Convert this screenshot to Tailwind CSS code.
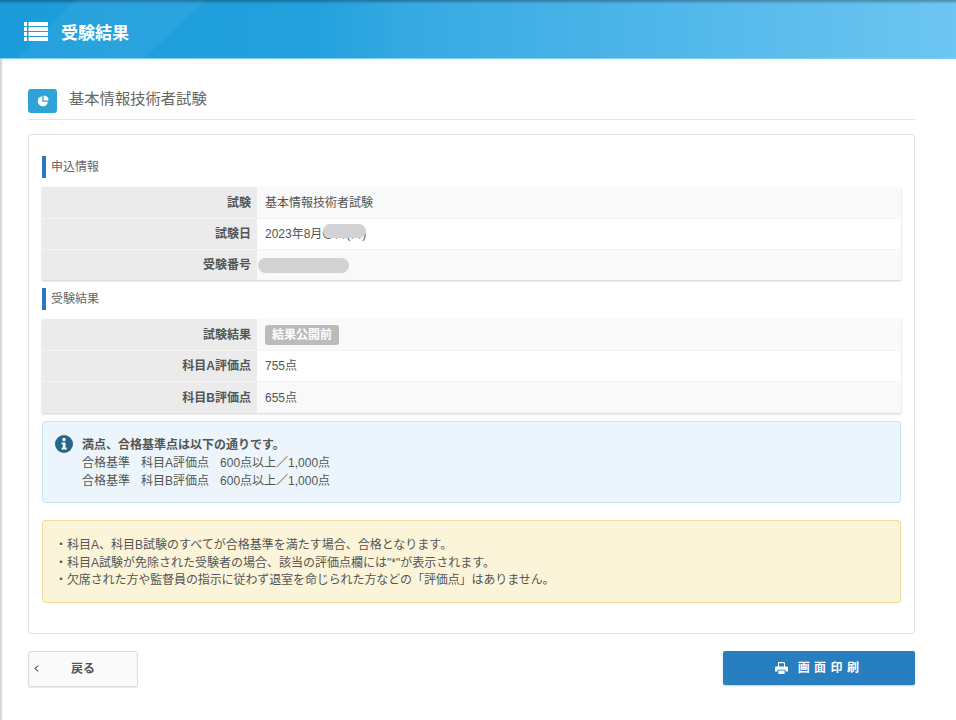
<!DOCTYPE html>
<html lang="ja">
<head>
  <meta charset="UTF-8">
  <meta name="viewport" content="width=device-width, initial-scale=1.0">
  <script src="https://cdn.jsdelivr.net/npm/@tailwindcss/browser@4"></script>
</head>
<body>
<div class="relative min-h-[720px] h-[720px] overflow-hidden bg-white text-[12px] text-[#555] font-['Liberation_Sans','Noto_Sans_CJK_JP',sans-serif]">
  <!-- left edge shadow -->
  <div class="absolute left-0 top-0 bottom-0 w-[3px] bg-gradient-to-r from-[#c8c8c8] to-white"></div>

  <!-- header -->
  <header class="relative h-[59px] border-b border-[#7fcdf0] bg-[linear-gradient(90deg,#1a9cdb_0%,#22a1dd_33%,#35a9e2_42%,#4db5e9_67%,#6dc6f1_100%)] overflow-hidden flex items-center pl-[24px] pt-[4px]">
    <div class="absolute inset-x-0 top-0 h-[4px] bg-gradient-to-b from-black/30 to-transparent"></div>
    <div class="absolute left-0 top-0 h-full w-[205px] bg-white/5 [clip-path:polygon(75px_0,205px_0,145px_100%,18px_100%)]"></div>
    <svg class="relative" width="24" height="19" viewBox="0 0 24 19" fill="#fff">
      <rect x="0" y="0" width="3" height="4"/><rect x="4.5" y="0" width="19.5" height="4"/>
      <rect x="0" y="5" width="3" height="4"/><rect x="4.5" y="5" width="19.5" height="4"/>
      <rect x="0" y="10" width="3" height="4"/><rect x="4.5" y="10" width="19.5" height="4"/>
      <rect x="0" y="15" width="3" height="4"/><rect x="4.5" y="15" width="19.5" height="4"/>
    </svg>
    <h1 class="relative ml-[13px] mt-[6px] text-[17px] font-bold text-white">受験結果</h1>
  </header>

  <main class="pl-[28px] pr-[41px] pt-[30px]">
    <!-- title -->
    <div class="flex items-center h-[24px] border-b border-[#e5e5e5] pb-[6px] box-content">
      <span class="flex items-center justify-center w-[29px] h-[24px] rounded-[3px] bg-[#2ea3d8]">
        <svg width="12" height="12" viewBox="0 0 12 12" fill="#fff">
          <path d="M5.3 1.2A5 5 0 1 0 10.8 6.7H5.3Z"/><path d="M6.6 0.4A5 5 0 0 1 11.6 5.4H6.6Z"/>
        </svg>
      </span>
      <h2 class="ml-[12px] mb-[3px] text-[15.3px] text-[#666]">基本情報技術者試験</h2>
    </div>

    <!-- card -->
    <section class="mt-[14px] h-[500px] border border-[#e0e0e0] rounded-[3px] px-[13px] pt-[21px]">
      <h3 class="border-l-[4px] border-[#2d78b8] pl-[5px] h-[22px] leading-[22px] text-[#666]">申込情報</h3>

      <table class="relative mt-[9px] w-full border-collapse shadow-[0_1px_2px_rgba(0,0,0,0.2)]">
        <tr class="h-[31px] bg-[#f9f9f9] border-b border-[#f4f4f4]">
          <th class="w-[215px] bg-[#ebebeb] pr-[6px] pt-[1px] text-right font-bold">試験</th>
          <td class="pl-[8px] pt-[1px]">基本情報技術者試験</td>
        </tr>
        <tr class="h-[31px] bg-white border-b border-[#f4f4f4]">
          <th class="bg-[#ebebeb] pr-[6px] pt-[1px] text-right font-bold">試験日</th>
          <td class="relative pl-[8px] pt-[1px]">2023年8月〇日(日)<span class="absolute left-[66px] top-[5px] w-[43px] h-[14px] rounded-full bg-[#d2d2d4]"></span></td>
        </tr>
        <tr class="h-[31px] bg-[#f9f9f9]">
          <th class="bg-[#ebebeb] pr-[6px] pt-[1px] text-right font-bold">受験番号</th>
          <td class="relative pl-[8px]"><span class="absolute left-[1px] top-[8px] w-[91px] h-[15px] rounded-full bg-[#d2d2d4]"></span></td>
        </tr>
      </table>

      <h3 class="mt-[8px] border-l-[4px] border-[#2d78b8] pl-[5px] h-[22px] leading-[22px] text-[#666]">受験結果</h3>

      <table class="mt-[9px] w-full border-collapse shadow-[0_1px_2px_rgba(0,0,0,0.2)]">
        <tr class="h-[31px] bg-[#f9f9f9] border-b border-[#f4f4f4]">
          <th class="w-[215px] bg-[#ebebeb] pr-[6px] pt-[1px] text-right font-bold">試験結果</th>
          <td class="pl-[8px] pt-[1px]"><span class="inline-block h-[20px] leading-[20px] px-[7px] rounded-[3px] bg-[#bbb] text-white font-bold align-middle">結果公開前</span></td>
        </tr>
        <tr class="h-[31px] bg-white border-b border-[#f4f4f4]">
          <th class="bg-[#ebebeb] pr-[6px] pt-[1px] text-right font-bold">科目A評価点</th>
          <td class="pl-[8px] pt-[1px]">755点</td>
        </tr>
        <tr class="h-[32px] bg-[#f9f9f9]">
          <th class="bg-[#ebebeb] pr-[6px] pt-[1px] text-right font-bold">科目B評価点</th>
          <td class="pl-[8px] pt-[1px]">655点</td>
        </tr>
      </table>

      <!-- info -->
      <div class="mt-[8px] h-[82px] flex border border-[#c5e6f2] rounded-[3px] bg-[#ebf5fb] pl-[12px] pt-[14px] leading-[18px]">
        <svg class="mt-[-1px] shrink-0" width="18" height="18" viewBox="0 0 18 18">
          <circle cx="9" cy="9" r="9" fill="#23668c"/>
          <circle cx="9" cy="4.5" r="1.7" fill="#fff"/>
          <path d="M6.5 7.4H10.5V12.8H11.8V14.6H6.5V12.8H7.8V9.2H6.5Z" fill="#fff"/>
        </svg>
        <div class="ml-[9px]">
          <p class="font-bold">満点、合格基準点は以下の通りです。</p>
          <p>合格基準<span class="ml-[11px]">科目A評価点</span><span class="ml-[11px]">600点以上／1,000点</span></p>
          <p>合格基準<span class="ml-[11px]">科目B評価点</span><span class="ml-[11px]">600点以上／1,000点</span></p>
        </div>
      </div>

      <!-- note -->
      <div class="mt-[17px] h-[83px] border border-[#f5d9a0] rounded-[3px] bg-[#fbf4d9] pl-[12px] pt-[16px] leading-[17.5px]">
        <p>・科目A、科目B試験のすべてが合格基準を満たす場合、合格となります。</p>
        <p>・科目A試験が免除された受験者の場合、該当の評価点欄には"*"が表示されます。</p>
        <p class="tracking-[-0.1px]">・欠席された方や監督員の指示に従わず退室を命じられた方などの「評価点」はありません。</p>
      </div>
    </section>

    <!-- buttons -->
    <div class="mt-[17px] flex justify-between">
      <button class="relative w-[110px] h-[36px] border border-[#dcdcdc] rounded-[3px] bg-[#fafafa] shadow-[0_1px_1px_rgba(0,0,0,0.1)] font-bold text-[#555]">
        <svg class="absolute left-[5px] top-[13px]" width="5" height="7" viewBox="0 0 5 7" fill="none" stroke="#666" stroke-width="1.2"><path d="M4.2 0.6L1 3.5L4.2 6.4"/></svg>
        戻る
      </button>
      <button class="flex items-center justify-center w-[192px] h-[34px] rounded-[2px] bg-[#287fc0] shadow-[0_1px_2px_rgba(0,0,0,0.2)] font-bold text-white">
        <svg class="mr-[10px]" width="13" height="12" viewBox="0 0 13 12" fill="#fff">
          <path d="M3 0H9L10 1V5H9V1.2H4V5H3Z"/>
          <path d="M0 6Q0 4.6 1.4 4.6H11.6Q13 4.6 13 6V9.5H10.5V7.8H2.5V9.5H0Z"/>
          <rect x="3.4" y="8.6" width="6.2" height="3.4"/>
        </svg>
        <span class="tracking-[4.4px]">画面印刷</span>
      </button>
    </div>
  </main>
</div>
</body>
</html>
